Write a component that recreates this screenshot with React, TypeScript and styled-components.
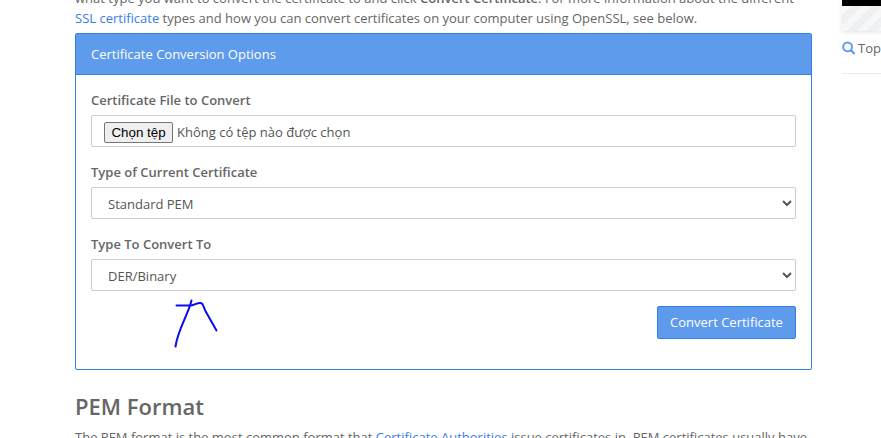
import React from "react";
import styled, { createGlobalStyle } from "styled-components";

const GlobalStyle = createGlobalStyle`
  *, *::before, *::after { box-sizing: border-box; }
  html, body { margin: 0; overflow: hidden; background: #fff; }
  body {
    font-family: "Open Sans", "Noto Sans", sans-serif;
    font-size: 13px;
    line-height: 20px;
    color: #666;
  }
`;

const Page = styled.div`
  display: flex;
  gap: 29px;
  width: 881px;
  height: 438px;
  padding-left: 75px;
  overflow: hidden;
`;

const Main = styled.main`
  flex: 0 0 737px;
`;

const Paragraph = styled.p`
  margin: 0;
  white-space: nowrap;
`;

const Intro = styled(Paragraph)`
  margin-top: -12px;
`;

const Strong = styled.strong`
  font-weight: 600;
`;

const Link = styled.a`
  color: #3a7de3;
  text-decoration: none;
`;

const Panel = styled.section`
  height: 337px;
  margin-top: 5px;
  border: 1px solid #3480e3;
  border-radius: 2px;
`;

const PanelHeader = styled.header`
  height: 41px;
  padding: 10px 15px;
  border-bottom: 1px solid #3480e3;
  background: #5e9bec;
  color: #fff;
`;

const Form = styled.form`
  display: flex;
  flex-direction: column;
  padding: 15px;
`;

const Field = styled.div`
  margin-bottom: 15px;
`;

const Label = styled.label`
  display: block;
  height: 25px;
  font-weight: 600;
`;

const FileBox = styled.div`
  display: flex;
  align-items: center;
  gap: 4px;
  height: 32px;
  padding: 2px 12px 0;
  border: 1px solid #ccc;
  border-radius: 2px;
  color: #555;
`;

const FileButton = styled.button`
  width: 69px;
  height: 21px;
  padding: 0;
  border: 1px solid #767676;
  border-radius: 2px;
  background: #efefef;
  color: #000;
  font: 13.333px "Liberation Sans", Arial, sans-serif;
`;

const Select = styled.select`
  display: block;
  width: 100%;
  height: 32px;
  padding: 6px 12px;
  border: 1px solid #ccc;
  border-radius: 2px;
  background: #fff;
  color: #555;
  font: 13px/20px "Open Sans", sans-serif;
`;

const SubmitButton = styled.button`
  align-self: flex-end;
  width: 139px;
  height: 33px;
  padding: 0 0 2px;
  border: 1px solid #3480e3;
  border-radius: 2px;
  background: #5e9bec;
  color: #fff;
  font: 13px/20px "Open Sans", sans-serif;
`;

const Heading = styled.h2`
  margin: 21px 0 6px;
  font-size: 22px;
  font-weight: 600;
  line-height: 30px;
`;

const Sidebar = styled.aside`
  flex: 0 0 60px;
  height: 74px;
  padding-left: 1px;

  &::after {
    content: "";
    display: block;
    margin-top: 15px;
    border-bottom: 1px solid #e9e9e9;
  }
`;

const Banner = styled.div`
  height: 31px;
  border-top: 6px solid #000;
  background: repeating-linear-gradient(135deg, #f6f7f9 0 7px, #eff0f2 7px 14px);
  box-shadow: 0 1px 4px rgba(0, 0, 0, 0.12);
`;

const TopLink = styled.div`
  display: flex;
  align-items: center;
  gap: 3px;
  margin-top: 7px;
  white-space: nowrap;
`;

const SearchIcon = () => (
  <svg width="13" height="14" viewBox="0 0 13 14" fill="none" stroke="#5e9bec">
    <circle cx="5.6" cy="5.9" r="4.4" strokeWidth="2" />
    <path d="M9 9.4L11.9 12.3" strokeWidth="2.2" strokeLinecap="round" />
  </svg>
);

const Arrow = styled.svg`
  position: absolute;
  left: 170px;
  top: 295px;
  pointer-events: none;
`;

export default function App() {
  return (
    <>
      <GlobalStyle />
      <Page>
        <Main>
          <Intro>
            what type you want to convert the certificate to and click <Strong>Convert Certificate</Strong>. For more information about the different
            <br />
            <Link>SSL certificate</Link> types and how you can convert certificates on your computer using OpenSSL, see below.
          </Intro>
          <Panel>
            <PanelHeader>Certificate Conversion Options</PanelHeader>
            <Form>
              <Field>
                <Label>Certificate File to Convert</Label>
                <FileBox>
                  <FileButton type="button">Chọn tệp</FileButton>
                  <span>Không có tệp nào được chọn</span>
                </FileBox>
              </Field>
              <Field>
                <Label htmlFor="current">Type of Current Certificate</Label>
                <Select id="current">
                  <option>Standard PEM</option>
                </Select>
              </Field>
              <Field>
                <Label htmlFor="target">Type To Convert To</Label>
                <Select id="target">
                  <option>DER/Binary</option>
                </Select>
              </Field>
              <SubmitButton type="button">Convert Certificate</SubmitButton>
            </Form>
          </Panel>
          <Heading>PEM Format</Heading>
          <Paragraph>
            The PEM format is the most common format that <Link>Certificate Authorities</Link> issue certificates in. PEM certificates usually have
          </Paragraph>
        </Main>
        <Sidebar>
          <Banner />
          <TopLink>
            <SearchIcon />
            Top
          </TopLink>
        </Sidebar>
      </Page>
      <Arrow width="50" height="55" fill="none" stroke="#0a0af0" strokeWidth="2" strokeLinecap="round" strokeLinejoin="round">
        <path d="M21.5 5.5C18 20 8 34 5.5 51.5" />
        <path d="M6.5 10.5H21C25 10 27 7.5 31 8C34 9 33 12 36 17L46.5 35.5" />
      </Arrow>
    </>
  );
}
